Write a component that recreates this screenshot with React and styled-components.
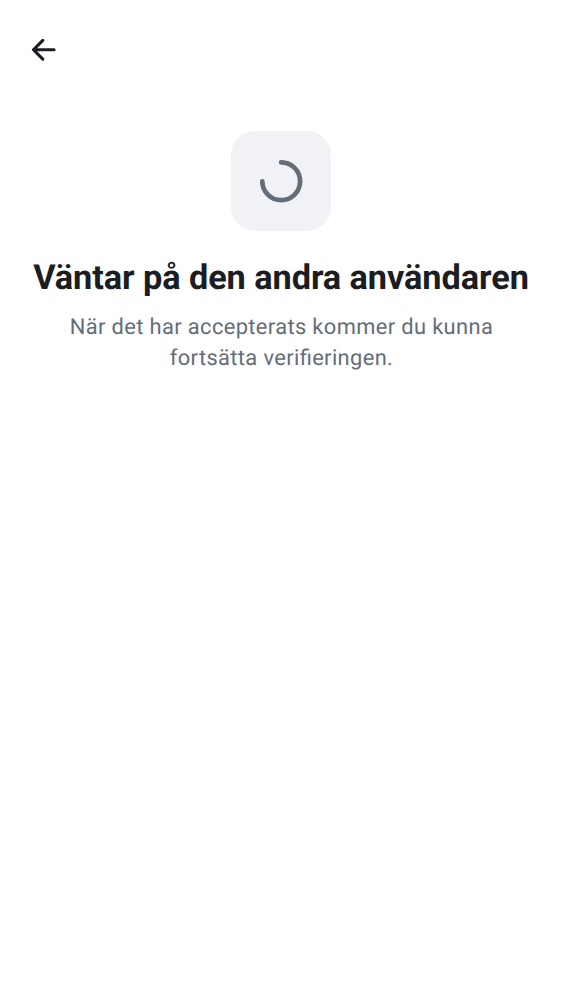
import React from "react";
import styled, { createGlobalStyle } from "styled-components";

const GlobalStyle = createGlobalStyle`
  *, *::before, *::after { box-sizing: border-box; }
  body { margin: 0; background: #ffffff; }
`;

const Screen = styled.div`
  display: flex;
  flex-direction: column;
  min-height: 100vh;
  background: #ffffff;
  font-family: Roboto, sans-serif;
  text-rendering: geometricPrecision;
`;

const TopBar = styled.header`
  display: flex;
  align-items: center;
  height: 100px;
  padding-left: 25px;
`;

const BackButton = styled.button`
  display: flex;
  padding: 0;
  border: 0;
  background: none;
  color: #1b1d22;
`;

const Content = styled.main`
  display: flex;
  flex-direction: column;
  align-items: center;
  padding: 31px 25px 0;
  text-align: center;
`;

const IconTile = styled.div`
  display: flex;
  align-items: center;
  justify-content: center;
  width: 100px;
  height: 100px;
  border-radius: 24px;
  background: #f0f2f5;
  color: #656d77;
`;

const Title = styled.h1`
  margin: 25px 0 0;
  color: #1b1d22;
  font-size: 34.3px;
  line-height: 44px;
  font-weight: 700;
  letter-spacing: -0.07px;
  white-space: nowrap;
`;

const Message = styled.p`
  width: 460px;
  margin: 12px 0 0;
  padding-left: 1px;
  color: #656d77;
  font-size: 21.87px;
  line-height: 31.2px;
  letter-spacing: 0.37px;
  font-feature-settings: "liga" 1;
`;

export default function App() {
  return (
    <Screen>
      <GlobalStyle />
      <TopBar>
        <BackButton aria-label="Tillbaka">
          <svg width="37.5" height="37.5" viewBox="0 0 24 24" fill="none" stroke="currentColor" strokeWidth="2" strokeLinecap="round" strokeLinejoin="round">
            <path d="M18.6 12H5.6M11.4 6L5.4 12l6 6" />
          </svg>
        </BackButton>
      </TopBar>
      <Content>
        <IconTile>
          <svg width="50" height="50" viewBox="0 0 50 50" fill="none" stroke="currentColor" strokeWidth="4.7" strokeLinecap="round">
            <path d="M25.2 6.4A18.9 18.9 0 1 1 6.3 25.3" />
          </svg>
        </IconTile>
        <Title>Väntar på den andra användaren</Title>
        <Message>När det har accepterats kommer du kunna fortsätta verifieringen.</Message>
      </Content>
    </Screen>
  );
}
